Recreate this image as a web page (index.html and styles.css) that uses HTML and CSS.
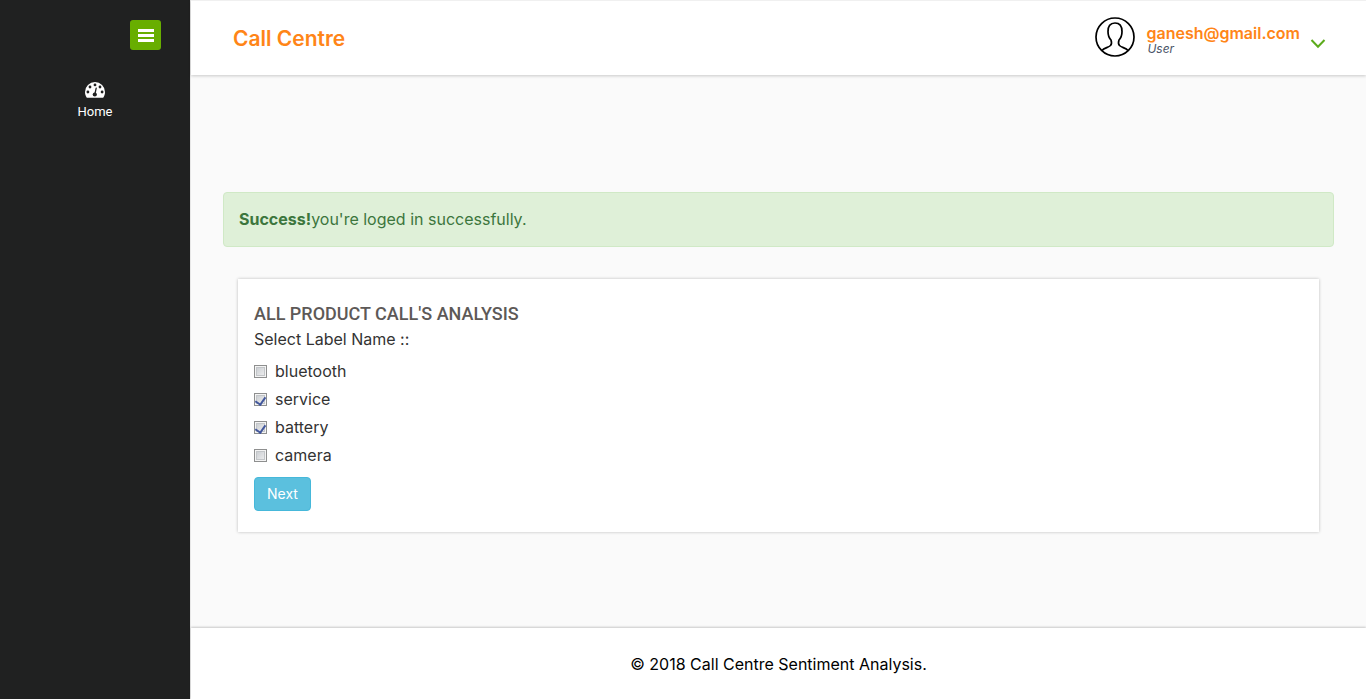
FILE: index.html
```html
<!DOCTYPE html>
<html lang="en">
<head>
<meta charset="utf-8">
<meta name="viewport" content="width=device-width, initial-scale=1">
<title>Call Centre</title>
<link rel="stylesheet" href="styles.css">
</head>
<body>
<div class="layout">
  <aside class="sidebar">
    <button class="menu-toggle" type="button" aria-label="Toggle menu">
      <svg width="17" height="13" viewBox="0 0 17 13" fill="#fff" aria-hidden="true"><rect x="1" width="16" height="3"/><rect x="1" y="5" width="16" height="3"/><rect x="1" y="10" width="16" height="3"/></svg>
    </button>
    <nav>
      <a class="nav-link" href="#">
        <svg width="20" height="16" viewBox="0 0 20 16" aria-hidden="true">
          <path fill="#fff" d="M10 0A10 10 0 0 0 0 10c0 2 .5 3.700 1.500 5.200.2.400.5.600.9.600h15.200c.4 0 .7-.2.900-.6 1-1.500 1.500-3.200 1.500-5.200A10 10 0 0 0 10 0z"/>
          <g fill="#202121"><circle cx="2.900" cy="10" r="1.400"/><circle cx="5" cy="5" r="1.400"/><circle cx="10" cy="2.900" r="1.400"/><circle cx="15" cy="5" r="1.400"/><circle cx="17.100" cy="10" r="1.400"/><circle cx="9.800" cy="12.500" r="2.100"/></g>
          <path d="M9.800 12.500L11.200 6.200" stroke="#202121" stroke-width="1.300" stroke-linecap="round"/>
        </svg>
        <span>Home</span>
      </a>
    </nav>
  </aside>
  <div class="content">
    <header class="topbar">
      <h1 class="brand">Call Centre</h1>
      <div class="account">
        <svg class="avatar" width="40" height="40" viewBox="0 0 40 40" fill="none" stroke="#000" stroke-width="1.700" aria-hidden="true">
          <circle cx="20" cy="20" r="19"/>
          <path d="M7 33.500c2-2.500 6.500-3 8.500-5 1.500-1.500 1-4 .5-5.500-2-2-3-4.500-3-8.500 0-5.500 2-8.500 7-8.500s7 3 7 8.500c0 4-1 6.500-3 8.500-.5 1.500-1 4 .5 5.500 2 2 6.500 2.500 8.500 5"/>
        </svg>
        <div class="identity">
          <span class="email">ganesh@gmail.com</span>
          <em class="role">User</em>
        </div>
        <button class="account-toggle" type="button" aria-label="Account menu">
          <svg width="16" height="10" viewBox="0 0 16 10" fill="none" stroke="#5cab1c" stroke-width="2" aria-hidden="true"><path d="M1.500 1L8 7.800 14.500 1"/></svg>
        </button>
      </div>
    </header>
    <main class="main">
      <div class="alert" role="status"><strong>Success!</strong>you're loged in successfully.</div>
      <form class="card">
        <h2 class="card-title">ALL PRODUCT CALL'S ANALYSIS</h2>
        <fieldset class="options">
          <legend>Select Label Name ::</legend>
          <label class="option"><input type="checkbox"><span>bluetooth</span></label>
          <label class="option"><input type="checkbox" checked><span>service</span></label>
          <label class="option"><input type="checkbox" checked><span>battery</span></label>
          <label class="option"><input type="checkbox"><span>camera</span></label>
        </fieldset>
        <button class="next" type="button">Next</button>
      </form>
    </main>
    <footer class="footer">© 2018 Call Centre Sentiment Analysis.</footer>
  </div>
</div>
</body>
</html>
```
FILE: styles.css
```css
* { box-sizing: border-box; }
body {
  margin: 0;
  font: 16px/24px Inter, "Open Sans", sans-serif;
  color: #333;
  background: #fafafa;
}
button { font-family: inherit; cursor: pointer; }
.layout { display: flex; min-height: 100vh; }
.sidebar {
  display: flex;
  flex-direction: column;
  flex: 0 0 190px;
  background: #202121;
  padding-top: 20px;
}
.menu-toggle {
  display: flex;
  align-items: center;
  justify-content: center;
  align-self: flex-end;
  width: 31px;
  height: 30px;
  margin-right: 29px;
  padding: 0;
  border: 0;
  border-radius: 3px;
  background: #68ae00;
}
.nav-link {
  display: flex;
  flex-direction: column;
  align-items: center;
  gap: 6px;
  margin-top: 32px;
  color: #fff;
  font: 13px/16px Roboto, sans-serif;
  text-decoration: none;
}
.content {
  display: flex;
  flex: 1;
  flex-direction: column;
  min-width: 0;
  border-left: 1px solid #e7e7e7;
}
.topbar {
  display: flex;
  align-items: center;
  justify-content: space-between;
  height: 75px;
  padding: 0 40px 0 42px;
  border-top: 1px solid #f0f0f0;
  background: #fff;
  box-shadow: 0 1px 3px rgba(0, 0, 0, 0.2);
}
.brand { margin: 0; padding-top: 2px; font-size: 21px; font-weight: 600; line-height: 24px; color: #ff8517; }
.account { display: flex; align-items: center; padding-bottom: 2px; }
.identity { display: flex; flex-direction: column; margin-left: 11px; padding-top: 6px; }
.email { font-size: 16px; font-weight: 600; line-height: 18px; color: #ff8517; }
.role { font-size: 12px; line-height: 14px; color: #4b5568; padding-left: 1px; }
.account-toggle { display: flex; margin: 14px 0 0 10px; padding: 0; border: 0; background: none; }
.main { flex: 1; padding: 117px 32px 95px; }
.alert {
  padding: 15px;
  border: 1px solid #d0e9c6;
  border-radius: 4px;
  background: #dff0d8;
  color: #3c763d;
  line-height: 23px;
}
.alert strong { font-weight: 700; }
.card {
  margin: 32px 15px 0;
  padding: 23px 16px 21px;
  background: #fff;
  box-shadow: 0 0 3px rgba(0, 0, 0, 0.25);
}
.card-title { margin: 0; font: 500 18px/24px Roboto, sans-serif; color: #5d5957; }
.options { display: flex; flex-direction: column; gap: 4px; margin: 0; padding: 0; border: 0; }
.options legend { margin-bottom: 6px; padding: 0; line-height: 27px; }
.option { display: flex; align-items: center; gap: 8px; }
.option input {
  display: flex;
  justify-content: center;
  appearance: none;
  width: 13px;
  height: 13px;
  margin: 0;
  border: 1px solid #8e8f8f;
  background: linear-gradient(135deg, #c4c8cd, #f3f3f3);
  box-shadow: inset 0 0 0 1px #f4f4f4, inset 0 0 0 2px #c3c6c9;
}
.option input:checked::before {
  content: "";
  width: 5px;
  height: 8px;
  margin-top: 1px;
  border: solid #42579c;
  border-width: 0 2px 2px 0;
  transform: rotate(35deg);
}
.next {
  display: block;
  margin-top: 10px;
  padding: 6px 12px;
  border: 1px solid #46b8da;
  border-radius: 4px;
  background: #5bc0de;
  color: #fff;
  font-size: 14px;
  line-height: 20px;
}
.footer {
  padding: 24px 16px 23px;
  background: #fff;
  box-shadow: 0 -1px 2px rgba(0, 0, 0, 0.2);
  color: #000;
  text-align: center;
}
```
